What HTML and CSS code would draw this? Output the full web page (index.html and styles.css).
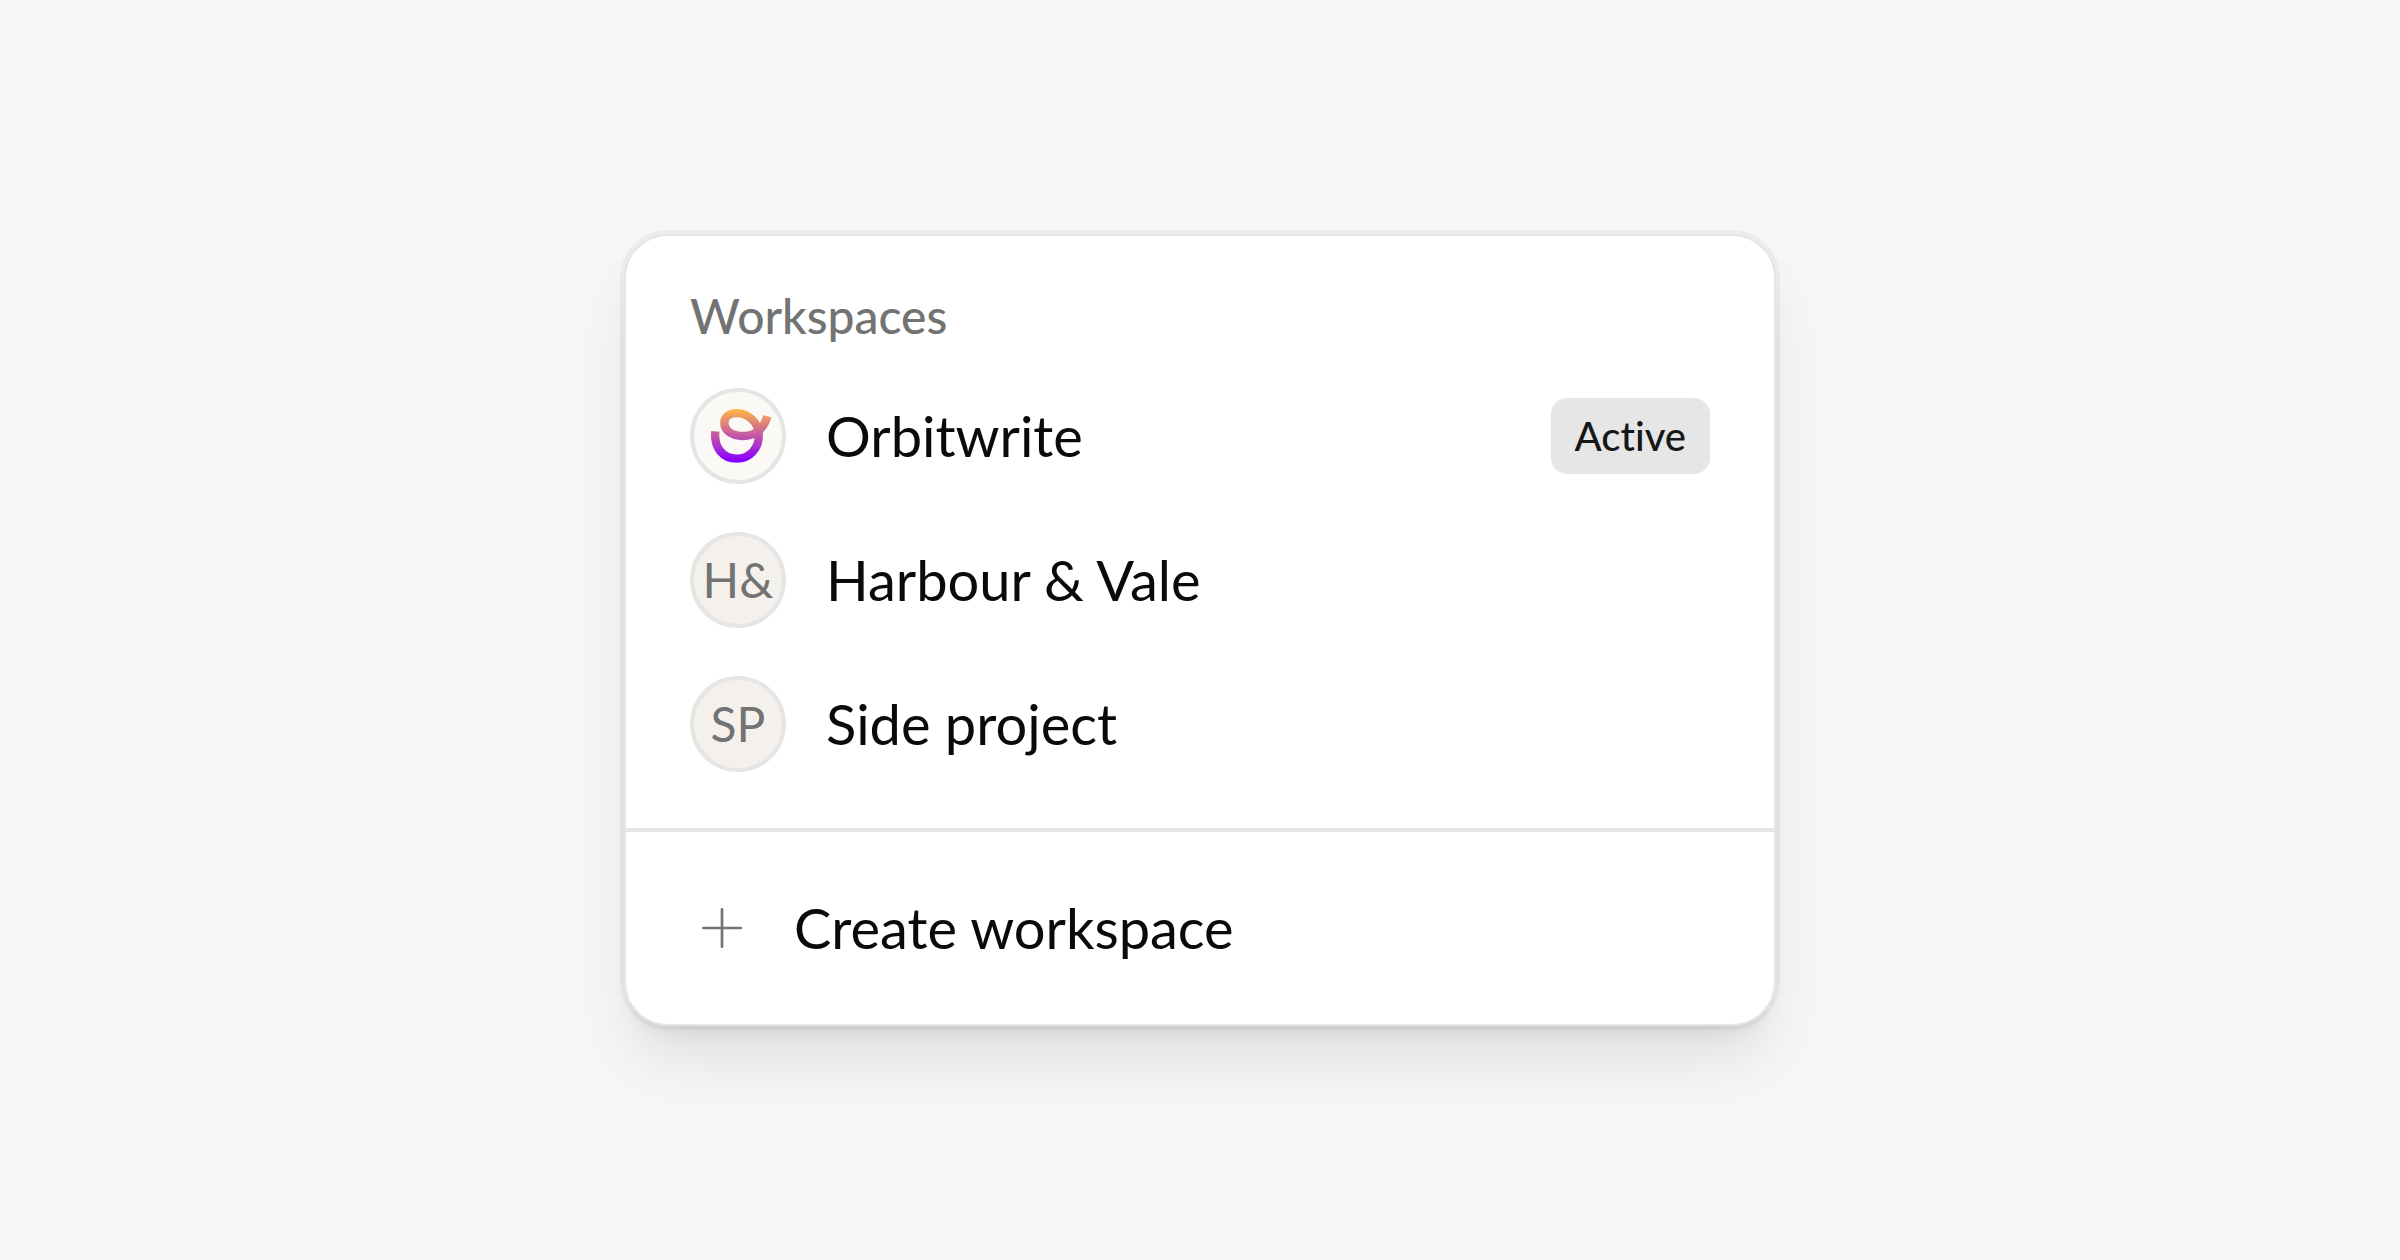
FILE: index.html
```html
<!DOCTYPE html>
<html lang="en">
<head>
  <meta charset="utf-8">
  <title>Workspaces</title>
  <link rel="stylesheet" href="styles.css">
</head>
<body>
  <div class="menu">
    <div class="menu-section">
      <h2 class="menu-label">Workspaces</h2>
      <button class="menu-item" type="button">
        <span class="avatar avatar-logo">
          <svg viewBox="42 36 264 264" fill="none" aria-hidden="true">
            <defs>
              <linearGradient id="orbit" gradientUnits="userSpaceOnUse" x1="0" y1="88" x2="0" y2="240">
                <stop offset="0" stop-color="#ffb545"/>
                <stop offset="1" stop-color="#8a00ff"/>
              </linearGradient>
            </defs>
            <path stroke="url(#orbit)" stroke-width="25" d="M262 109C256 133 236 168 190 168C152 168 133 149 133 129C133 110 150 99.500 170 99.500C204 99.500 236 127 236.500 164C237 205 210 236 170 236C129 236 101 203 106 154"/>
          </svg>
        </span>
        <span class="menu-name">Orbitwrite</span>
        <span class="badge">Active</span>
      </button>
      <button class="menu-item" type="button">
        <span class="avatar">H&amp;</span>
        <span class="menu-name">Harbour &amp; Vale</span>
      </button>
      <button class="menu-item" type="button">
        <span class="avatar">SP</span>
        <span class="menu-name">Side project</span>
      </button>
    </div>
    <div class="menu-footer">
      <button class="menu-item" type="button">
        <svg class="plus" viewBox="0 0 24 24" fill="none" stroke="currentColor" stroke-linecap="round" aria-hidden="true">
          <path d="M12 5v14M5 12h14"/>
        </svg>
        <span class="menu-name">Create workspace</span>
      </button>
    </div>
  </div>
</body>
</html>
```
FILE: styles.css
```css
* {
  box-sizing: border-box;
}

body {
  margin: 0;
  min-height: 100vh;
  display: flex;
  justify-content: center;
  align-items: center;
  background-color: #f7f6f4;
  color: #0a0a0a;
  font-family: Lato, "Open Sans", sans-serif;
}

.menu {
  width: 48%;
  border: 2px solid #e5e5e5;
  border-radius: 44px;
  background-color: #ffffff;
  box-shadow: 0 0 0 4px rgba(10, 10, 10, 0.04),
    0 40px 60px -12px rgba(0, 0, 0, 0.1),
    0 16px 24px -16px rgba(0, 0, 0, 0.1);
}

.menu-section {
  padding: 48px 16px 32px;
}

.menu-label {
  margin: 0;
  padding: 0 48px 16px;
  color: #737373;
  font-size: 48px;
  font-weight: 500;
  line-height: 64px;
}

.menu-item {
  display: flex;
  align-items: center;
  gap: 40px;
  width: 100%;
  min-height: 144px;
  padding: 24px 48px;
  border: 0;
  background: none;
  color: inherit;
  font-family: inherit;
  font-size: 56px;
  font-variant-ligatures: none;
  line-height: 80px;
  text-align: left;
  cursor: pointer;
}

.menu-name {
  flex: 1;
}

.avatar {
  display: flex;
  justify-content: center;
  align-items: center;
  flex: none;
  width: 96px;
  height: 96px;
  border: 4px solid #e5e5e5;
  border-radius: 50%;
  background-color: #f4f1ec;
  color: #737373;
  font-size: 48px;
  line-height: 64px;
}

.avatar-logo {
  background-color: #faf9f6;
}

.avatar svg {
  width: 100%;
  height: 100%;
}

.badge {
  padding: 10px 24px;
  border-radius: 16px;
  background-color: #e6e6e6;
  color: #171717;
  font-size: 40px;
  font-weight: 500;
  line-height: 56px;
}

.menu-footer {
  padding: 24px 16px;
  border-top: 4px solid #e5e5e5;
}

.plus {
  flex: none;
  width: 64px;
  height: 64px;
  color: #737373;
}
```
